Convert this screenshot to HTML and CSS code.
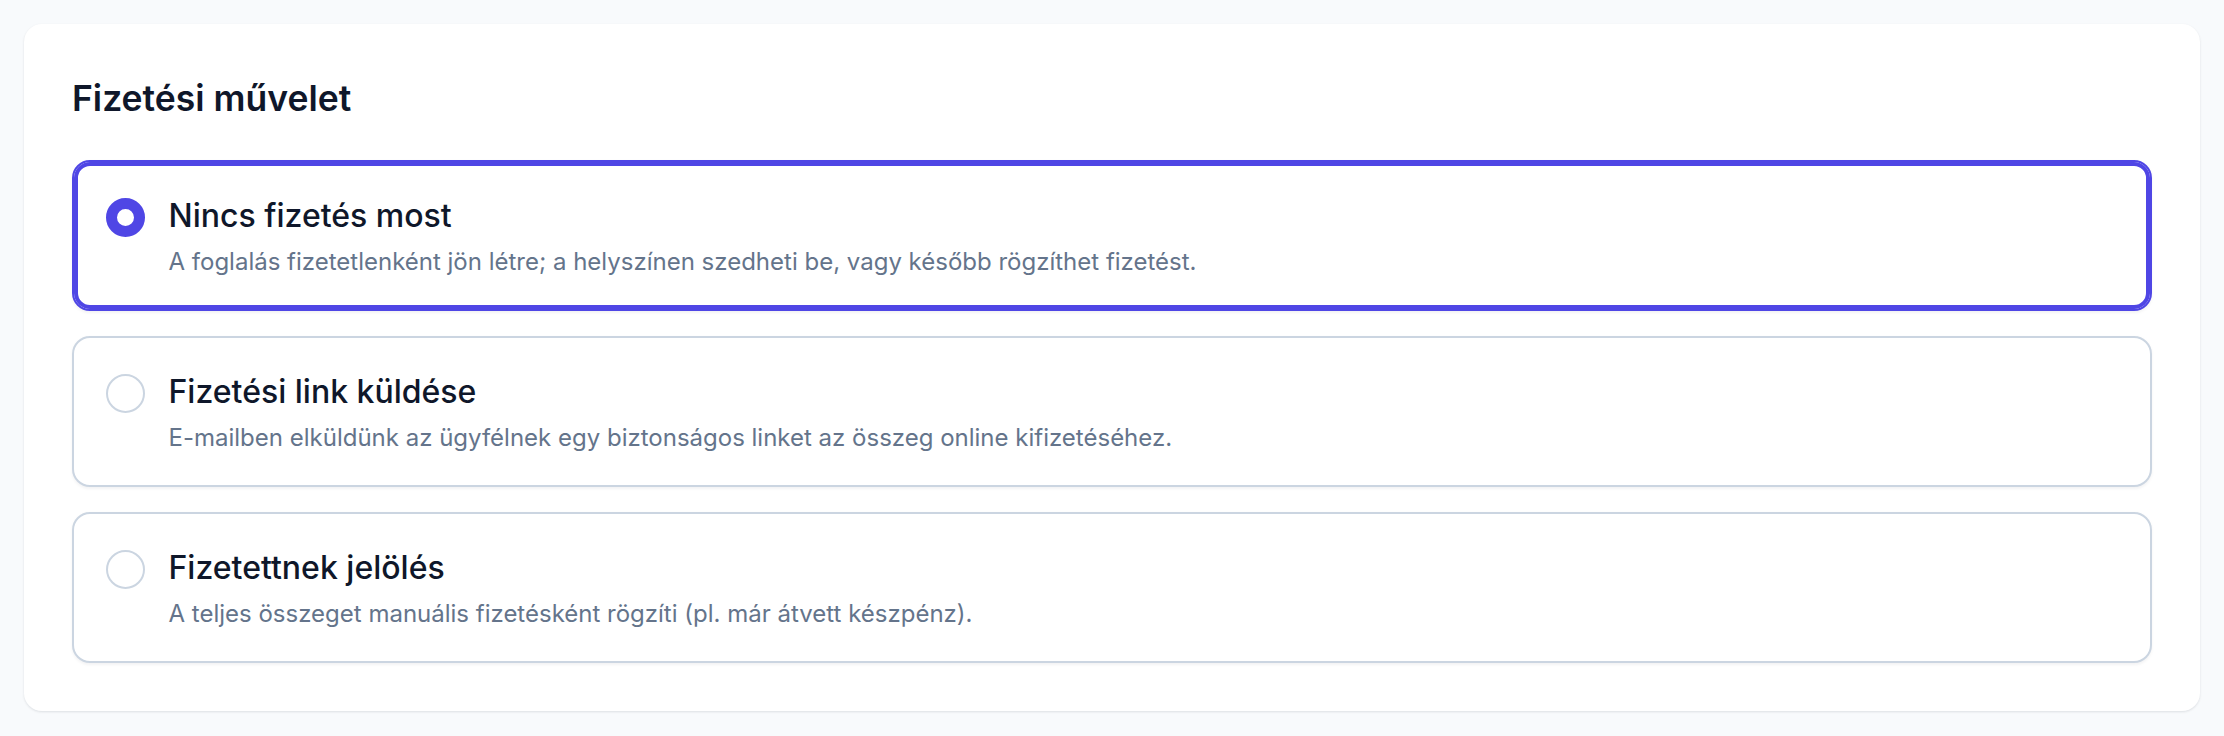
FILE: index.html
```html
<!DOCTYPE html>
<html lang="hu">
<head>
<meta charset="utf-8">
<title>Fizetési művelet</title>
<link rel="stylesheet" href="styles.css">
</head>
<body>
<section class="card">
  <h2 class="card-title">Fizetési művelet</h2>
  <div class="options" role="radiogroup">
    <label class="option is-selected">
      <span class="radio"></span>
      <span class="option-text">
        <span class="option-title">Nincs fizetés most</span>
        <span class="option-desc">A foglalás fizetetlenként jön létre; a helyszínen szedheti be, vagy később rögzíthet fizetést.</span>
      </span>
    </label>
    <label class="option">
      <span class="radio"></span>
      <span class="option-text">
        <span class="option-title">Fizetési link küldése</span>
        <span class="option-desc">E-mailben elküldünk az ügyfélnek egy biztonságos linket az összeg online kifizetéséhez.</span>
      </span>
    </label>
    <label class="option">
      <span class="radio"></span>
      <span class="option-text">
        <span class="option-title">Fizetettnek jelölés</span>
        <span class="option-desc">A teljes összeget manuális fizetésként rögzíti (pl. már átvett készpénz).</span>
      </span>
    </label>
  </div>
</section>
</body>
</html>
```

FILE: styles.css
```css
* { box-sizing: border-box; }
html, body { margin: 0; }
body {
  background: #f8fafc;
  padding: 24px;
  font-family: Inter, "Noto Sans", "Liberation Sans", sans-serif;
  color: #0f172a;
}
.card {
  background: #ffffff;
  border-radius: 18px;
  padding: 48px;
  box-shadow: 0 1px 3px rgba(15, 23, 42, 0.08), 0 1px 2px rgba(15, 23, 42, 0.04);
}
.card-title {
  margin: 0 0 34px;
  font-size: 35.5px;
  line-height: 54px;
  font-weight: 600;
  color: #0f172a;
}
.options {
  display: flex;
  flex-direction: column;
  gap: 25px;
}
.option {
  display: flex;
  align-items: flex-start;
  gap: 24px;
  padding: 32.5px 31.5px 31.5px;
  border: 2px solid #cbd5e1;
  border-radius: 18px;
  background: #ffffff;
  box-shadow: 0 1.5px 3px rgba(15, 23, 42, 0.05);
  cursor: pointer;
}
.option.is-selected {
  border-color: #4f46e5;
  box-shadow: inset 0 0 0 4px #4f46e5, 0 1.5px 3px rgba(15, 23, 42, 0.05);
}
.radio {
  flex: none;
  width: 39px;
  height: 39px;
  margin-top: 3.5px;
  border-radius: 50%;
  border: 2px solid #cbd5e1;
  background: #ffffff;
}
.is-selected .radio {
  border: 11px solid #4f46e5;
}
.option-text {
  display: flex;
  flex-direction: column;
  gap: 8px;
}
.option-title {
  font-size: 32px;
  line-height: 42px;
  font-weight: 500;
  color: #0f172a;
}
.option-desc {
  font-size: 24px;
  line-height: 33px;
  color: #64748b;
}
```
